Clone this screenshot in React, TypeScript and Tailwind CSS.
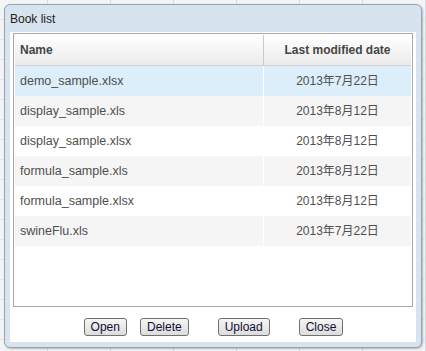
import React from "react";

type Book = { name: string; date: string };

const books: Book[] = [
  { name: "demo_sample.xlsx", date: "2013年7月22日" },
  { name: "display_sample.xls", date: "2013年8月12日" },
  { name: "display_sample.xlsx", date: "2013年8月12日" },
  { name: "formula_sample.xls", date: "2013年8月12日" },
  { name: "formula_sample.xlsx", date: "2013年8月12日" },
  { name: "swineFlu.xls", date: "2013年7月22日" },
];

const DialogButton = ({ label, className = "" }: { label: string; className?: string }) => (
  <button
    className={`h-[18px] px-[6px] border border-[#707070] rounded-[3px] bg-gradient-to-b from-[#f6f6f6] to-[#dcdcdc] text-[12px] leading-none text-[#111133] ${className}`}
  >
    {label}
  </button>
);

const App = () => {
  const selected = 0;

  return (
    <div
      className="w-[426px] h-[351px] p-[4px] bg-[#f3f4f6] bg-[linear-gradient(90deg,transparent_47px,#d5dbe3_47px,#d5dbe3_48px,transparent_48px),linear-gradient(180deg,transparent_19px,#e1e5ea_19px,#e1e5ea_20px,transparent_20px)] bg-[length:63px_20px] overflow-hidden"
      style={{ fontFamily: '"Liberation Sans", Arial, "Noto Sans CJK JP", sans-serif' }}
    >
      <div className="w-[418px] h-[344px] flex flex-col rounded-[6px] border border-[#97a3b1] bg-[#d7e3ee] px-[5px] pb-[5px] shadow-[1px_1px_2px_rgba(0,0,0,0.25)]">
        {/* title bar */}
        <div className="h-[27px] flex items-center text-[12px] text-[#222]">Book list</div>

        {/* body */}
        <div className="flex-1 flex flex-col bg-white pt-[1px] px-[3px]">
          <div className="h-[274px] border border-[#a8a8a8] p-[1px]">
            <div className="flex h-[31px] border-b border-[#cfcfcf] bg-gradient-to-b from-white to-[#ebebeb] text-[12px] font-bold text-[#454545]">
              <div className="w-[249px] flex items-center pl-[5px] border-r border-[#c9c9c9]">Name</div>
              <div className="flex-1 flex items-center justify-center">Last modified date</div>
            </div>
            {books.map((book, i) => (
              <div
                key={book.name}
                className={`flex h-[30px] text-[#4f4f4f] ${
                  i === selected ? "bg-[#dbeefa]" : i % 2 === 1 ? "bg-[#f5f5f5]" : "bg-white"
                }`}
              >
                <div className="w-[249px] flex items-center pl-[5px] text-[12.5px] border-r border-white">
                  {book.name}
                </div>
                <div className="flex-1 flex items-center justify-center text-[12px]">{book.date}</div>
              </div>
            ))}
          </div>

          {/* buttons */}
          <div className="flex justify-center mt-[11px] pl-[1px]">
            <DialogButton label="Open" />
            <DialogButton label="Delete" className="ml-[13px]" />
            <DialogButton label="Upload" className="ml-[29px]" />
            <DialogButton label="Close" className="ml-[29px]" />
          </div>
        </div>
      </div>
    </div>
  );
};

export default App;
